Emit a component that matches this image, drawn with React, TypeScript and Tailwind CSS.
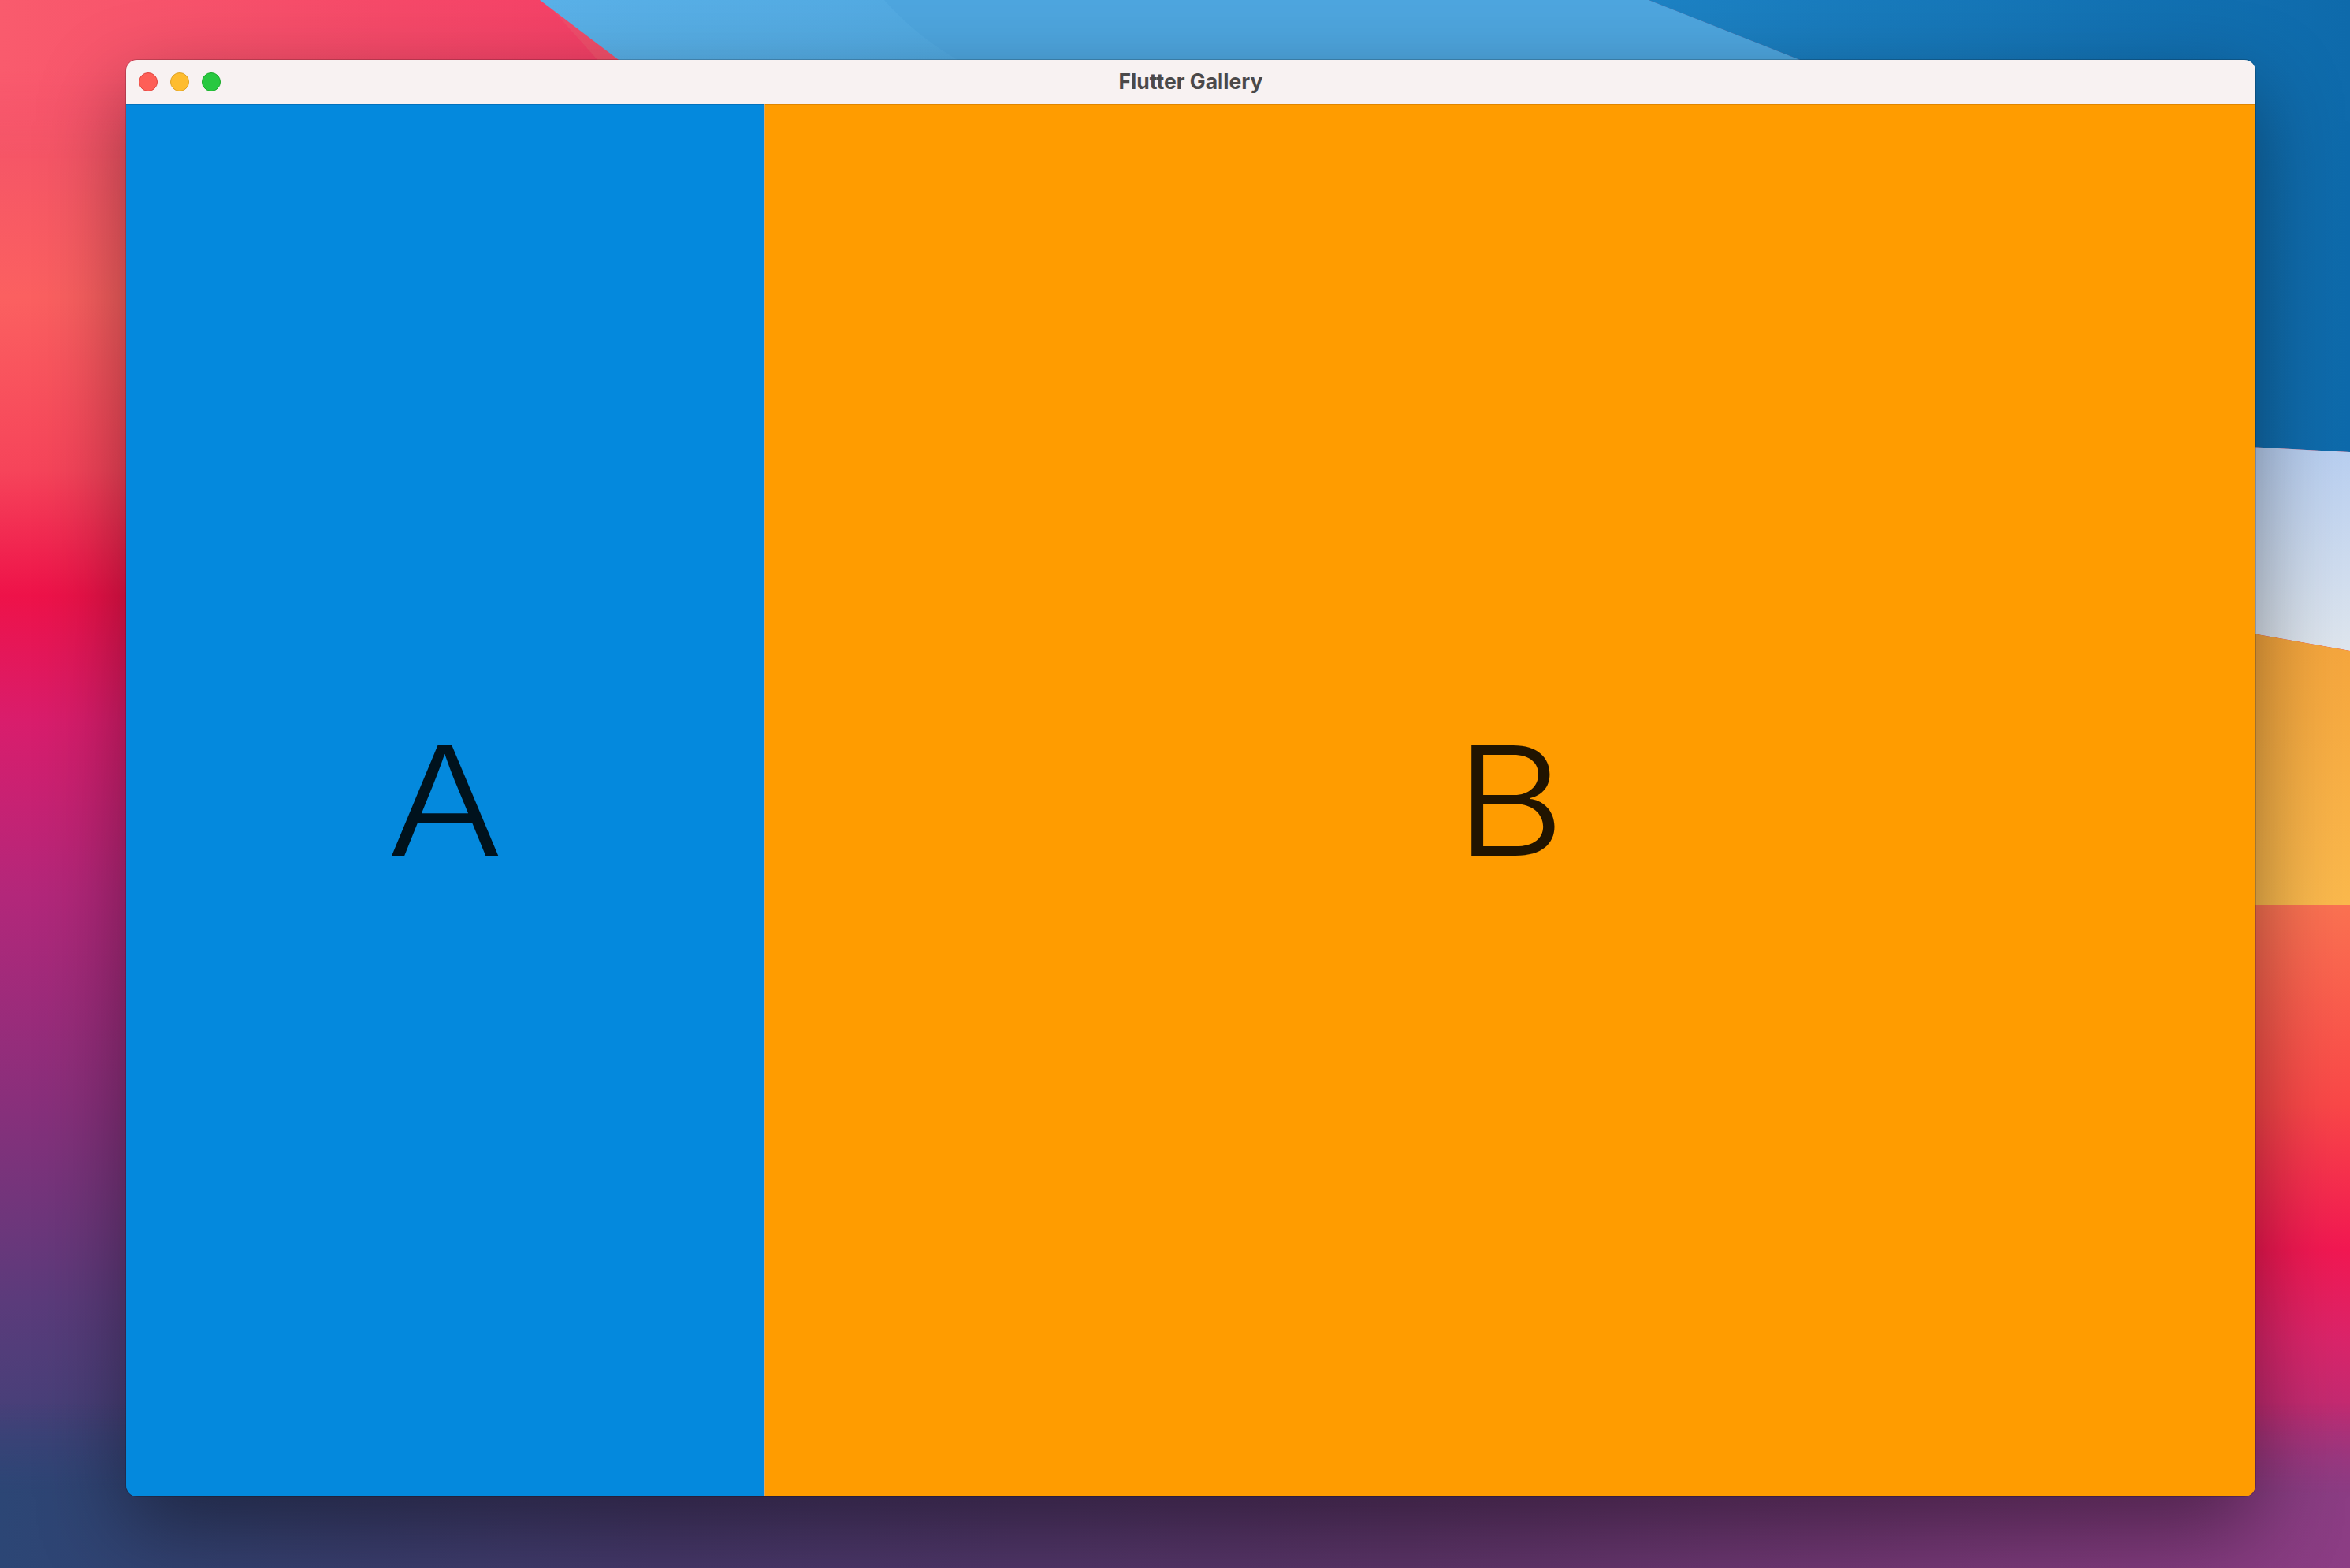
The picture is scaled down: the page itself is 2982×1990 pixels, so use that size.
function Wallpaper() {
  return (
    <svg
      className="absolute inset-0 h-full w-full"
      viewBox="0 0 2982 1990"
      preserveAspectRatio="none"
    >
      <defs>
        <linearGradient id="gl" x1="0" y1="0" x2="0" y2="1">
          <stop offset="0" stopColor="#f04b6d" />
          <stop offset="0.19" stopColor="#fb6060" />
          <stop offset="0.3" stopColor="#f6445a" />
          <stop offset="0.38" stopColor="#ee1249" />
          <stop offset="0.46" stopColor="#d91d6c" />
          <stop offset="0.57" stopColor="#b3277a" />
          <stop offset="0.7" stopColor="#8a2f7b" />
          <stop offset="0.83" stopColor="#5b3b7b" />
          <stop offset="1" stopColor="#2c4675" />
        </linearGradient>
        <linearGradient id="gb" gradientUnits="userSpaceOnUse" x1="0" y1="0" x2="2982" y2="0">
          <stop offset="0" stopColor="#2c4675" />
          <stop offset="0.28" stopColor="#46386a" />
          <stop offset="0.6" stopColor="#5c3468" />
          <stop offset="1" stopColor="#8c3d84" />
        </linearGradient>
        <linearGradient id="fade" x1="0" y1="0" x2="0" y2="1">
          <stop offset="0" stopColor="#fff" stopOpacity="0" />
          <stop offset="0.55" stopColor="#fff" stopOpacity="1" />
        </linearGradient>
        <mask id="mb">
          <rect x="0" y="1780" width="2982" height="210" fill="url(#fade)" />
        </mask>
        <linearGradient id="fadeTop" x1="0" y1="0" x2="0" y2="1">
          <stop offset="0.45" stopColor="#fff" stopOpacity="1" />
          <stop offset="1" stopColor="#fff" stopOpacity="0" />
        </linearGradient>
        <mask id="mt">
          <rect x="0" y="0" width="900" height="200" fill="url(#fadeTop)" />
        </mask>
        <linearGradient id="gtr" x1="0" y1="0" x2="1" y2="0">
          <stop offset="0" stopColor="#f95b6d" />
          <stop offset="1" stopColor="#f43c66" />
        </linearGradient>
        <linearGradient id="gtl" x1="0" y1="0" x2="1" y2="0">
          <stop offset="0" stopColor="#5ab1e8" />
          <stop offset="1" stopColor="#3f98d2" />
        </linearGradient>
        <linearGradient id="gtb" x1="0" y1="0" x2="1" y2="0">
          <stop offset="0" stopColor="#1d82c4" />
          <stop offset="1" stopColor="#0e6aab" />
        </linearGradient>
        <linearGradient id="glb" x1="0" y1="0" x2="0" y2="1">
          <stop offset="0" stopColor="#b5cdf1" />
          <stop offset="1" stopColor="#dfe6ee" />
        </linearGradient>
        <linearGradient id="gor" x1="0" y1="0" x2="0" y2="1">
          <stop offset="0" stopColor="#f4a23a" />
          <stop offset="1" stopColor="#fbb94d" />
        </linearGradient>
        <linearGradient id="grd" gradientUnits="userSpaceOnUse" x1="0" y1="1148" x2="0" y2="1990">
          <stop offset="0" stopColor="#fb7252" />
          <stop offset="0.3" stopColor="#fa4848" />
          <stop offset="0.52" stopColor="#f21852" />
          <stop offset="0.65" stopColor="#dc2469" />
          <stop offset="0.84" stopColor="#b03078" />
          <stop offset="1" stopColor="#8a3c82" />
        </linearGradient>
      </defs>

      <rect x="0" y="0" width="2982" height="1990" fill="url(#gl)" />

      {/* top strip */}
      <polygon points="0,0 690,0 870,200 0,200" fill="url(#gtr)" mask="url(#mt)" />
      <polygon points="685,0 2092,0 2370,110 830,110" fill="url(#gtl)" />
      <path d="M1122,0 C1230,120 1380,150 1600,110 L2370,110 L2092,0 Z" fill="#4ea6df" />
      <polygon points="2092,0 2982,0 2982,574 2500,548 2370,110" fill="url(#gtb)" />

      {/* right strip */}
      <polygon points="2500,548 2982,574 2982,826 2500,740" fill="url(#glb)" />
      <polygon points="2500,740 2982,826 2982,1148 2500,1148" fill="url(#gor)" />
      <polygon points="2500,1148 2982,1148 2982,1990 2500,1990" fill="url(#grd)" />

      {/* bottom strip */}
      <rect x="0" y="1780" width="2982" height="210" fill="url(#gb)" mask="url(#mb)" />
    </svg>
  )
}

function TrafficLights() {
  return (
    <div className="flex items-center gap-4">
      <span className="h-6 w-6 rounded-full border border-[#e0443e] bg-[#fe5f57]" />
      <span className="h-6 w-6 rounded-full border border-[#dea123] bg-[#febc2e]" />
      <span className="h-6 w-6 rounded-full border border-[#1aab29] bg-[#28c840]" />
    </div>
  )
}

export default function App() {
  return (
    <div className="relative h-screen w-screen overflow-hidden">
      <Wallpaper />
      <div className="relative pl-[160px] pt-[76px]">
        <div className="flex h-[1823px] w-[2702px] flex-col overflow-hidden rounded-[14px] shadow-[0_40px_110px_rgba(0,0,0,0.42),0_0_0_1px_rgba(0,0,0,0.18)]">
          <div className="relative flex h-[56px] shrink-0 items-center bg-[#f8f2f2] pl-4">
            <TrafficLights />
            <div className="pointer-events-none absolute inset-0 flex items-center justify-center">
              <span className="font-['Inter',sans-serif] text-[26.5px] font-bold text-[#4b494a]">
                Flutter Gallery
              </span>
            </div>
          </div>
          <div className="flex flex-1 font-['Inter',sans-serif] text-[192px] font-light leading-none text-black/[0.87]">
            <div className="flex w-[810px] shrink-0 items-center justify-center border-t border-[#0372bd] bg-[#0489dd]">
              <span className="inline-block scale-x-[1.14]">A</span>
            </div>
            <div className="w-px bg-[#d6a66a]" />
            <div className="flex flex-1 items-center justify-center border-t border-[#e08600] bg-[#ff9c00]">
              <span className="inline-block scale-x-[1.12]">B</span>
            </div>
          </div>
        </div>
      </div>
    </div>
  )
}
